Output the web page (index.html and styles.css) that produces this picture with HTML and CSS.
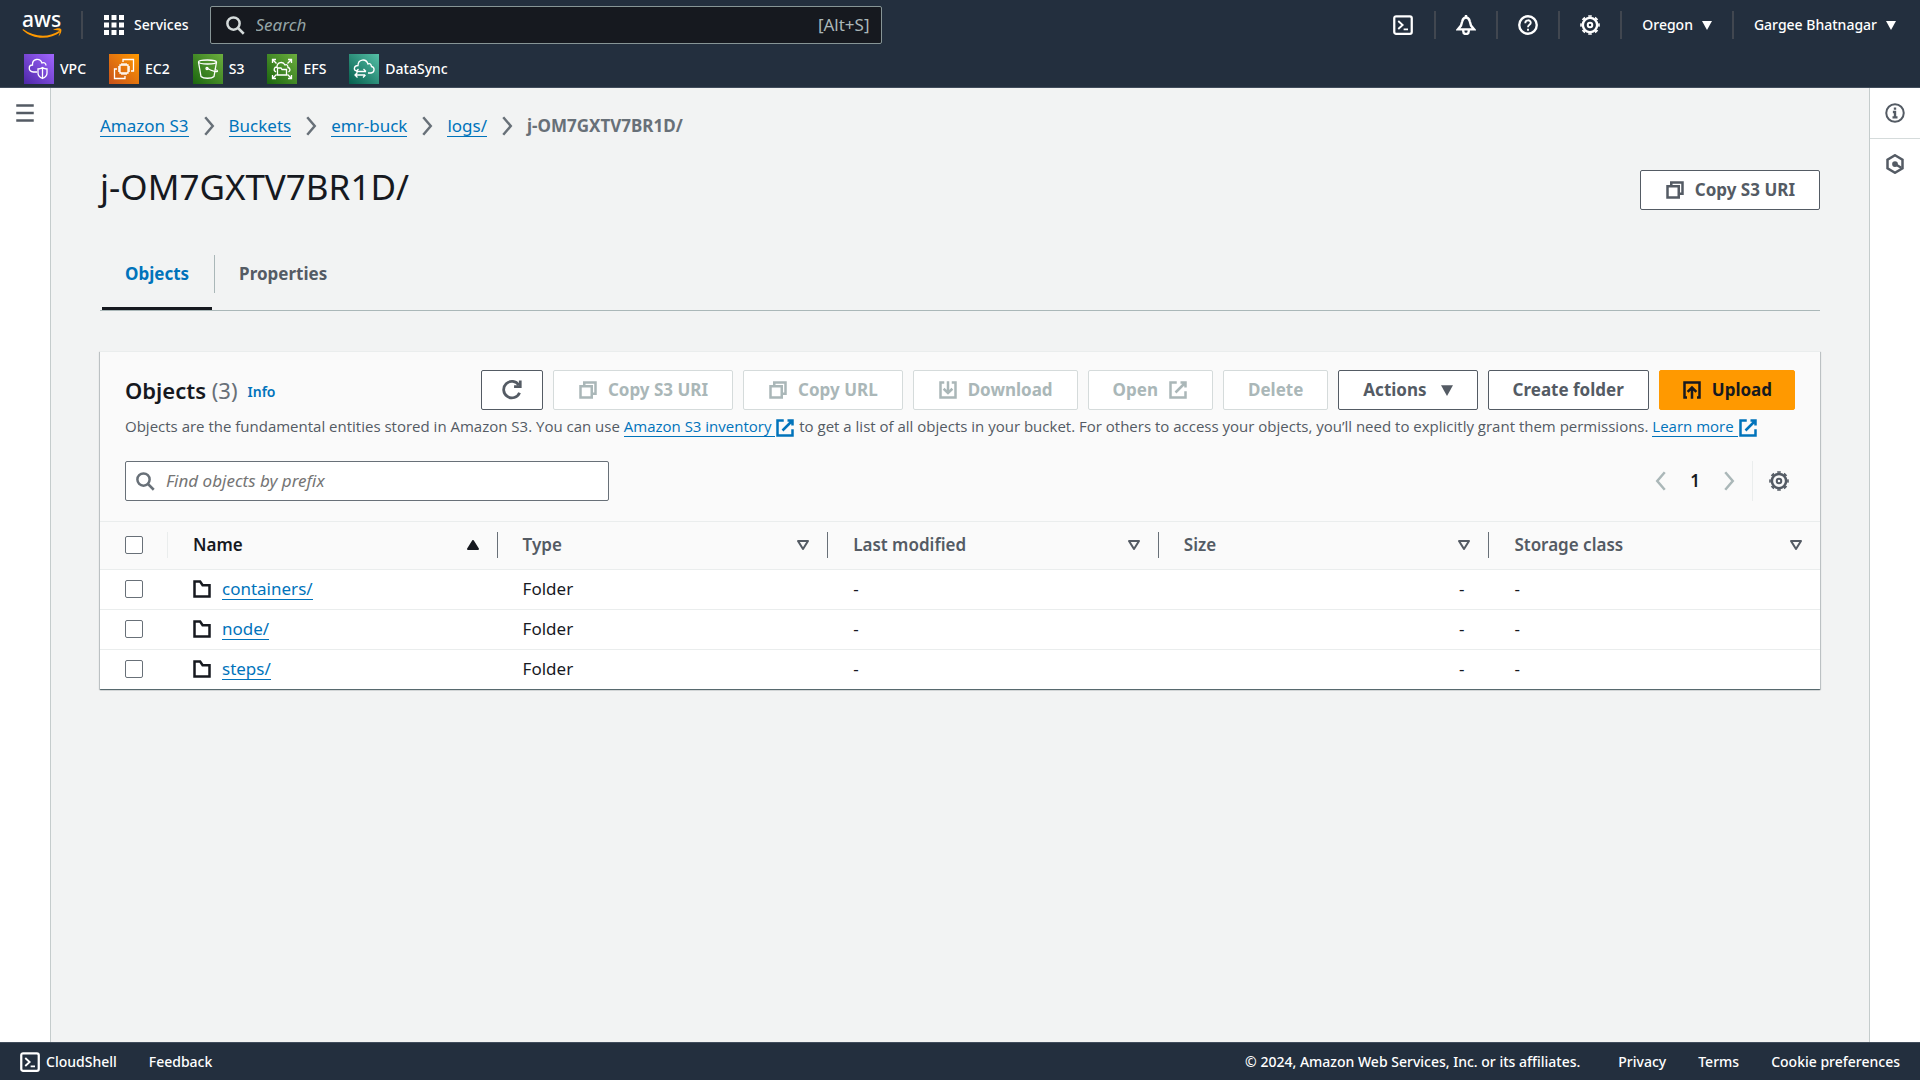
FILE: index.html
```html
<!DOCTYPE html>
<html lang="en">

<head>
  <meta charset="utf-8">
  <title>emr-buck - S3 bucket</title>
  <link rel="stylesheet" href="styles.css">
</head>

<body>
  <!-- shared icons -->
  <svg class="sprite" aria-hidden="true">
    <symbol id="i-search" viewBox="0 0 16 16"><circle cx="6.8" cy="6.8" r="4.9"/><path d="M10.4 10.4 15 15"/></symbol>
    <symbol id="i-copy" viewBox="0 0 16 16"><path d="M2 5h9v9H2z"/><path d="M5 5V2h9v9h-3"/></symbol>
    <symbol id="i-external" viewBox="0 0 16 16"><path d="M10 2h4v4M6 10l8-8"/><path d="M14 9v5H2V2h5"/></symbol>
    <symbol id="i-download" viewBox="0 0 16 16"><path d="M5 2H2v12h12V2h-3"/><path d="M8 1v9M4.5 7 8 10.4 11.5 7"/></symbol>
    <symbol id="i-upload" viewBox="0 0 16 16"><path d="M4 14H2V2h12v12h-2"/><path d="M8 15V6M4.5 9.5 8 6l3.5 3.5"/></symbol>
    <symbol id="i-refresh" viewBox="0 0 16 16"><path d="M13.5 10A6 6 0 1 1 13 4.5"/><path d="M14 1v4.5H9.5"/></symbol>
    <symbol id="i-folder" viewBox="0 0 16 16"><path d="M2 14V2h4.500l2 3H14v9z"/></symbol>
    <symbol id="i-next" viewBox="0 0 16 16"><path d="m5 1 6 7-6 7"/></symbol>
    <symbol id="i-prev" viewBox="0 0 16 16"><path d="M11 1 5 8l6 7"/></symbol>
    <symbol id="i-menu" viewBox="0 0 16 16"><path d="M1 2h14M1 8h14M1 14h14"/></symbol>
    <symbol id="i-gear" viewBox="0 0 16 16">
      <circle cx="8" cy="8" r="5.700"/>
      <circle cx="8" cy="8" r="7.200" pathLength="16" stroke-dasharray="1 1" stroke-dashoffset=".5" stroke-width="1.300"/>
      <circle cx="8" cy="8" r="1.800" stroke-width="1.600"/>
    </symbol>
    <symbol id="i-shell" viewBox="0 0 16 16"><rect x="1" y="1" width="14" height="14" rx="1.500" stroke-width="1.800"/><path d="m4.200 4.800 3.500 3.200-3.500 3.200M8.500 11.500H12" stroke-width="1.500"/></symbol>
    <symbol id="i-down" viewBox="0 0 10 10"><path class="solid" d="M0 1h10L5 10z"/></symbol>
  </svg>

  <header class="nav">
    <div class="nav-row">
      <a href="#" class="logo" aria-label="AWS home">
        <span>aws</span>
        <svg viewBox="0 0 40 11" width="40" height="11"><path d="M1 1c11 8 25 9 36 2l1.500 1C28 12 11 12 .5 2z"/><path d="M31 2c3-2 7-2 8-1s0 5-2.500 7.500c1-3 1.500-4.500 1-5.500-1-1-3-1-6.500-1z"/></svg>
      </a>
      <button class="services">
        <svg viewBox="0 0 20 20" width="20" height="20"><path d="M0 0h5v5H0zM7.500 0h5v5h-5zM15 0h5v5h-5zM0 7.500h5v5H0zM7.500 7.500h5v5h-5zM15 7.500h5v5h-5zM0 15h5v5H0zM7.500 15h5v5h-5zM15 15h5v5h-5z"/></svg>
        Services
      </button>
      <label class="nav-search">
        <svg class="icon"><use href="#i-search"/></svg>
        <input type="text" placeholder="Search" aria-label="Search">
        <span>[Alt+S]</span>
      </label>
      <div class="nav-tools">
        <button class="tool" aria-label="CloudShell"><svg class="icon"><use href="#i-shell"/></svg></button>
        <button class="tool" aria-label="Notifications">
          <svg class="icon" viewBox="0 0 16 16"><path d="M8 0v2M1.500 11.500h13L12 8.500 11 5C10.500 3 9.500 2 8 2S5.500 3 5 5L4 8.500zM5.800 12v1a2.200 2.200 0 0 0 4.400 0v-1"/></svg>
        </button>
        <button class="tool" aria-label="Help">
          <svg class="icon" viewBox="0 0 16 16"><circle cx="8" cy="8" r="7"/><path d="M5.800 6.500C5.800 3.500 10.300 3.600 10.200 6.200 10.200 7.900 8 7.700 8 9.700M8 11v1.500" stroke-width="1.500"/></svg>
        </button>
        <button class="tool" aria-label="Settings"><svg class="icon"><use href="#i-gear"/></svg></button>
        <button class="tool text">Oregon <svg class="caret"><use href="#i-down"/></svg></button>
        <button class="tool text">Gargee Bhatnagar <svg class="caret"><use href="#i-down"/></svg></button>
      </div>
    </div>
    <nav class="favorites">
      <a href="#">
        <svg class="vpc" viewBox="0 0 30 30"><path d="M13 18H9.500C3.500 17 4.500 11 8.500 11 8 4.500 16 3.500 18 9c2-1 4 0 4 2.500M14 15c2 0 3-.5 4.500-1.500C20 14.500 21 15 23 15v4c0 3-2 4.500-4.500 5.500C16 23.500 14 22 14 19zM18.500 13.500v11"/></svg>
        VPC
      </a>
      <a href="#">
        <svg class="ec2" viewBox="0 0 30 30"><path d="M11 11h8v8h-8zM13 11V9M15 11V9M17 11V9M13 21v-2M15 21v-2M17 21v-2M11 13H9M11 15H9M11 17H9M21 13h-2M21 15h-2M21 17h-2M14 8V5.500h10.500V17H22M8 15H5.500v9.500H16V22"/></svg>
        EC2
      </a>
      <a href="#">
        <svg class="s3" viewBox="0 0 30 30"><ellipse cx="14.500" cy="8" rx="9" ry="2"/><path d="M5.500 8 8 22.500c2.500 2.300 10.500 2.300 13 0L23.500 8M14.500 14.500c5 3 10 4 10 2.500 0-.8-2-1.700-3-2"/><circle cx="14" cy="14.500" r="1"/></svg>
        S3
      </a>
      <a href="#">
        <svg class="s3" viewBox="0 0 30 30"><path d="M5.500 9V5.500H9M5.500 5.500l4 4M21 5.500h3.500V9M24.500 5.500l-4 4M5.500 21v3.500H9M5.500 24.500l4-4M24.500 21v3.500H21M24.500 24.500l-4-4M9 18c-3-1.500-2-5 1-5 0-5 6-6 8-2 2-1 3 .5 3 2.500 2 .5 3 3 .5 4.500M10.500 21v-7H14l1 1.500h4.500V21z"/></svg>
        EFS
      </a>
      <a href="#">
        <svg class="datasync" viewBox="0 0 30 30"><path d="M7.500 17C4 16 5 11.500 9 11.500 9 5 17 4 19 10c2-1 3 0 3.500 2.500 3.500.5 3.500 6-.5 6.500h-3M17 17.500H7M9.500 15 7 17.500M14.500 15l2.500 2.500M6 21h10M8.500 18.500 6 21l2.500 2.500M14 23.500l2.500-2.500"/></svg>
        DataSync
      </a>
    </nav>
  </header>

  <div class="layout">
    <aside class="rail">
      <button aria-label="Open navigation"><svg class="icon"><use href="#i-menu"/></svg></button>
    </aside>

    <main>
      <nav class="breadcrumb" aria-label="Breadcrumb">
        <a href="#">Amazon S3</a>
        <svg class="icon"><use href="#i-next"/></svg>
        <a href="#">Buckets</a>
        <svg class="icon"><use href="#i-next"/></svg>
        <a href="#">emr-buck</a>
        <svg class="icon"><use href="#i-next"/></svg>
        <a href="#">logs/</a>
        <svg class="icon"><use href="#i-next"/></svg>
        <b>j-OM7GXTV7BR1D/</b>
      </nav>

      <div class="page-title">
        <h1>j-OM7GXTV7BR1D/</h1>
        <button class="btn"><svg class="icon"><use href="#i-copy"/></svg>Copy S3 URI</button>
      </div>

      <div class="tabs" role="tablist">
        <button class="active" role="tab" aria-selected="true">Objects</button>
        <button role="tab">Properties</button>
      </div>

      <section class="card">
        <div class="card-head">
          <div class="card-title">
            <h2>Objects <span>(3)</span></h2>
            <a href="#" class="info">Info</a>
            <div class="actions">
              <button class="btn refresh" aria-label="Refresh"><svg class="icon big"><use href="#i-refresh"/></svg></button>
              <button class="btn" disabled><svg class="icon"><use href="#i-copy"/></svg>Copy S3 URI</button>
              <button class="btn" disabled><svg class="icon"><use href="#i-copy"/></svg>Copy URL</button>
              <button class="btn" disabled><svg class="icon"><use href="#i-download"/></svg>Download</button>
              <button class="btn" disabled>Open<svg class="icon"><use href="#i-external"/></svg></button>
              <button class="btn" disabled>Delete</button>
              <button class="btn menu">Actions<svg class="caret"><use href="#i-down"/></svg></button>
              <button class="btn">Create folder</button>
              <button class="btn primary"><svg class="icon"><use href="#i-upload"/></svg>Upload</button>
            </div>
          </div>
          <p>Objects are the fundamental entities stored in Amazon S3. You can use <a href="#">Amazon S3 inventory </a><svg class="icon link-icon"><use href="#i-external"/></svg> to get a list of all objects in your bucket. For others to access your objects, you’ll need to explicitly grant them permissions. <a href="#">Learn more </a><svg class="icon link-icon"><use href="#i-external"/></svg></p>
          <div class="filter">
            <label class="find">
              <svg class="icon"><use href="#i-search"/></svg>
              <input type="text" placeholder="Find objects by prefix" aria-label="Find objects by prefix">
            </label>
            <div class="pages">
              <button disabled aria-label="Previous page"><svg class="icon"><use href="#i-prev"/></svg></button>
              <button class="current">1</button>
              <button disabled aria-label="Next page"><svg class="icon"><use href="#i-next"/></svg></button>
            </div>
            <button class="prefs" aria-label="Preferences"><svg class="icon"><use href="#i-gear"/></svg></button>
          </div>
        </div>

        <table>
          <thead>
            <tr>
              <th class="check"><input type="checkbox" aria-label="Select all"></th>
              <th class="sorted"><div>Name<svg class="sort" viewBox="0 0 12 10"><path class="solid" d="M6 1 11 9H1z"/></svg></div></th>
              <th><div>Type<svg class="sort" viewBox="0 0 12 10"><path d="M1 1h10L6 9z"/></svg></div></th>
              <th><div>Last modified<svg class="sort" viewBox="0 0 12 10"><path d="M1 1h10L6 9z"/></svg></div></th>
              <th><div>Size<svg class="sort" viewBox="0 0 12 10"><path d="M1 1h10L6 9z"/></svg></div></th>
              <th><div>Storage class<svg class="sort" viewBox="0 0 12 10"><path d="M1 1h10L6 9z"/></svg></div></th>
            </tr>
          </thead>
          <tbody>
            <tr>
              <td class="check"><input type="checkbox" aria-label="Select containers/"></td>
              <td><div class="name"><svg class="icon"><use href="#i-folder"/></svg><a href="#">containers/</a></div></td>
              <td>Folder</td>
              <td>-</td>
              <td class="size">-</td>
              <td>-</td>
            </tr>
            <tr>
              <td class="check"><input type="checkbox" aria-label="Select node/"></td>
              <td><div class="name"><svg class="icon"><use href="#i-folder"/></svg><a href="#">node/</a></div></td>
              <td>Folder</td>
              <td>-</td>
              <td class="size">-</td>
              <td>-</td>
            </tr>
            <tr>
              <td class="check"><input type="checkbox" aria-label="Select steps/"></td>
              <td><div class="name"><svg class="icon"><use href="#i-folder"/></svg><a href="#">steps/</a></div></td>
              <td>Folder</td>
              <td>-</td>
              <td class="size">-</td>
              <td>-</td>
            </tr>
          </tbody>
        </table>
      </section>
    </main>

    <aside class="rail right">
      <button aria-label="Info">
        <svg class="icon" viewBox="0 0 16 16"><circle cx="8" cy="8" r="7" stroke-width="1.600"/><path d="M8 3.500v1.800M6.300 7.200H8v4M6 11.500h4" stroke-width="1.900"/></svg>
      </button>
      <button aria-label="Diagnostics">
        <svg class="icon" viewBox="0 0 16 16"><path d="m8 1 6 3.500v7L8 15l-6-3.500v-7z"/><path d="m8 8 5 3"/><circle class="solid" cx="8" cy="8" r="1.300"/></svg>
      </button>
    </aside>
  </div>

  <footer>
    <a href="#" class="shell"><svg class="icon"><use href="#i-shell"/></svg>CloudShell</a>
    <a href="#">Feedback</a>
    <span class="copyright">© 2024, Amazon Web Services, Inc. or its affiliates.</span>
    <a href="#">Privacy</a>
    <a href="#">Terms</a>
    <a href="#">Cookie preferences</a>
  </footer>
</body>

</html>
```
FILE: styles.css
```css
* {
  box-sizing: border-box;
}

body {
  margin: 0;
  min-height: 100vh;
  display: flex;
  flex-direction: column;
  background: #f2f3f3;
  color: #16191f;
  font-family: "Noto Sans", "Open Sans", sans-serif;
  font-size: 17px;
  line-height: 24px;
}

button,
input {
  font: inherit;
  color: inherit;
}

button {
  background: none;
  border: none;
  padding: 0;
  cursor: pointer;
}

a {
  color: #0073bb;
  text-decoration: none;
}

input::placeholder {
  font-style: italic;
  opacity: 1;
}

/* icons */
.sprite {
  position: absolute;
  width: 0;
  height: 0;
}

.icon {
  width: 20px;
  height: 20px;
  flex: none;
  fill: none;
  stroke: currentColor;
  stroke-width: 2;
}

.icon.big {
  width: 22px;
  height: 22px;
}

.caret {
  width: 10px;
  height: 10px;
  flex: none;
}

.solid {
  fill: currentColor;
}

/* top navigation */
.nav {
  background: #232f3e;
  border-bottom: 1px solid #414d5c;
  color: #fff;
  font-size: 14px;
  font-weight: 500;
}

.nav-row {
  display: flex;
  align-items: center;
  height: 50px;
}

.logo {
  width: 83px;
  height: 28px;
  padding-left: 22px;
  border-right: 2px solid #414750;
  color: #fff;
  font-size: 21px;
  line-height: 17px;
}

.logo span,
.logo svg {
  display: block;
}

.logo path {
  fill: #ff9900;
}

.services {
  display: flex;
  align-items: center;
  gap: 10px;
  padding: 0 21px;
}

.services svg {
  fill: #fff;
}

.nav-search {
  display: flex;
  align-items: center;
  gap: 9px;
  width: 35%;
  height: 38px;
  padding: 0 11px 0 14px;
  background: #16191f;
  border: 1px solid #879596;
  border-radius: 2px;
  color: #aab7b8;
  font-size: 17px;
  font-weight: 400;
}

.nav-search .icon {
  color: #d5dbdb;
}

.nav-search input {
  flex: 1;
  min-width: 0;
  background: none;
  border: none;
}

.nav-search input::placeholder {
  color: #95a5a6;
}

.nav-tools {
  display: flex;
  margin-left: auto;
}

.tool {
  display: flex;
  align-items: center;
  justify-content: center;
  gap: 9px;
  width: 62px;
  height: 28px;
  border-left: 2px solid #414750;
}

.tool:first-child {
  border-left: none;
}

.tool .icon {
  stroke-width: 1.9;
}

.tool.text {
  width: auto;
  padding: 0 20px;
}

.tool.text:last-child {
  padding-right: 24px;
}

.favorites {
  display: flex;
  gap: 23px;
  padding: 4px 24px 3px;
}

.favorites a {
  display: flex;
  align-items: center;
  gap: 6px;
  color: #fff;
}

.favorites svg {
  width: 30px;
  height: 30px;
  fill: none;
  stroke: #fff;
  stroke-width: 1.3;
}

.vpc {
  background: linear-gradient(45deg, #4d27a8, #a166ff);
}

.ec2 {
  background: linear-gradient(45deg, #c8511b, #ff9900);
}

.s3 {
  background: linear-gradient(45deg, #1b660f, #6cae3e);
}

.datasync {
  background: linear-gradient(45deg, #055f4e, #56c0a7);
}

/* page layout */
.layout {
  flex: 1;
  display: flex;
}

.rail {
  width: 51px;
  flex: none;
  background: #fff;
  border-right: 1px solid #c5cccc;
  color: #545b64;
}

.rail.right {
  border-right: none;
  border-left: 1px solid #c5cccc;
}

.rail button {
  display: flex;
  align-items: center;
  justify-content: center;
  width: 100%;
  height: 50px;
}

.rail.right button + button {
  border-top: 1px solid #d5dbdb;
}

main {
  flex: 1;
  min-width: 0;
  padding: 26px 49px;
}

.breadcrumb {
  display: flex;
  align-items: center;
  gap: 10px;
  color: #687078;
}

.breadcrumb a,
.card p a,
.name a {
  border-bottom: 1px solid #0073bb;
  line-height: 21px;
}

.page-title {
  display: flex;
  align-items: flex-end;
  justify-content: space-between;
  margin-top: 26px;
}

h1 {
  margin: 0;
  font-size: 35px;
  font-weight: 400;
  line-height: 46px;
}

.btn {
  display: flex;
  align-items: center;
  justify-content: center;
  gap: 10px;
  height: 40px;
  padding: 0 24px;
  background: #fff;
  border: 1px solid #545b64;
  border-radius: 2px;
  color: #545b64;
  font-weight: 700;
  white-space: nowrap;
}

.btn:disabled {
  border-color: #d5dbdb;
  color: #aab7b8;
}

.btn.refresh {
  padding: 0 19px;
}

.btn.menu {
  gap: 14px;
}

.btn.menu .caret {
  width: 12px;
  height: 12px;
}

.btn.primary {
  padding: 0 22px;
  background: #ff9900;
  border-color: #ff9900;
  color: #16191f;
}

/* tabs */
.tabs {
  display: flex;
  margin-top: 38px;
  border-bottom: 1px solid #aab7b8;
}

.tabs button {
  position: relative;
  height: 62px;
  padding: 0 25px 11px;
  color: #545b64;
  font-weight: 700;
}

.tabs button.active {
  color: #0073bb;
}

/* divider between the tabs */
.tabs button + button::before {
  content: "";
  position: absolute;
  left: 0;
  top: 7px;
  height: 38px;
  border-left: 1px solid #aab7b8;
}

.tabs .active::after {
  content: "";
  position: absolute;
  left: 2px;
  right: 2px;
  bottom: 0;
  height: 3px;
  background: #16191f;
}

/* objects card */
.card {
  margin-top: 40px;
  background: #fff;
  border-top: 1px solid #eaeded;
  box-shadow: 0 1px 1px rgba(0, 28, 36, 0.5), 1px 1px 1px rgba(0, 28, 36, 0.15), -1px 1px 1px rgba(0, 28, 36, 0.15);
}

.card-head {
  padding: 18px 25px 20px;
  background: #fafafa;
  border-bottom: 1px solid #eaeded;
}

.card-title {
  display: flex;
  align-items: center;
}

h2 {
  margin: 0;
  font-size: 22px;
  font-weight: 600;
}

h2 span {
  color: #687078;
  font-weight: 400;
}

.info {
  margin: 4px 0 0 10px;
  font-size: 14px;
  font-weight: 600;
}

.actions {
  display: flex;
  gap: 10px;
  margin-left: auto;
}

.card p {
  margin: 4px 0 23px;
  color: #545b64;
  font-family: "Open Sans", sans-serif;
  font-size: 15px;
}

.link-icon {
  color: #0073bb;
  vertical-align: middle;
}

.filter {
  display: flex;
  align-items: center;
}

.find {
  display: flex;
  align-items: center;
  gap: 9px;
  width: 29%;
  height: 40px;
  padding: 0 9px;
  background: #fff;
  border: 1px solid #687078;
  border-radius: 2px;
  color: #687078;
}

.find input {
  flex: 1;
  min-width: 0;
  background: none;
  border: none;
}

.pages {
  display: flex;
  align-items: center;
  gap: 19px;
  margin-left: auto;
  padding-right: 13px;
  border-right: 1px solid #eaeded;
  height: 40px;
}

.pages button {
  display: flex;
}

.pages button:disabled {
  color: #aab7b8;
}

.pages .current {
  font-weight: 600;
}

.prefs {
  display: flex;
  padding: 0 6px 0 16px;
  color: #545b64;
}

/* table */
table {
  width: 100%;
  border-collapse: collapse;
  table-layout: fixed;
}

th,
td {
  padding: 0 25px;
  text-align: left;
}

th {
  height: 47px;
  padding: 0;
  background: #fafafa;
  border-bottom: 1px solid #eaeded;
  color: #545b64;
  font-weight: 600;
}

th div {
  display: flex;
  align-items: center;
  justify-content: space-between;
  height: 26px;
  padding: 0 18px 0 25px;
  border-right: 1px solid #687078;
}

th:last-child div {
  border-right: none;
}

th.sorted {
  color: #16191f;
}

th.sorted div {
  border-left: 1px solid #eaeded;
}

.sort {
  width: 12px;
  height: 10px;
  fill: none;
  stroke: currentColor;
  stroke-width: 2;
  stroke-linejoin: round;
}

.sorted .sort {
  fill: currentColor;
}

td {
  height: 40px;
  border-bottom: 1px solid #eaeded;
}

tbody tr:last-child td {
  border-bottom: none;
}

.check {
  width: 67px;
  padding: 0 0 0 25px;
}

.check input {
  display: block;
  appearance: none;
  width: 18px;
  height: 18px;
  margin: 0;
  background: #fff;
  border: 1px solid #687078;
  border-radius: 2px;
}

.name {
  display: flex;
  align-items: center;
  gap: 10px;
}

.size {
  text-align: right;
}

/* footer */
footer {
  display: flex;
  align-items: center;
  gap: 32px;
  height: 38px;
  padding: 0 20px;
  background: #232f3e;
  border-top: 1px solid #414d5c;
  color: #fff;
  font-size: 14px;
  font-weight: 500;
}

footer a {
  color: #fff;
}

.shell {
  display: flex;
  align-items: center;
  gap: 6px;
}

.copyright {
  margin: 0 6px 0 auto;
}
```
